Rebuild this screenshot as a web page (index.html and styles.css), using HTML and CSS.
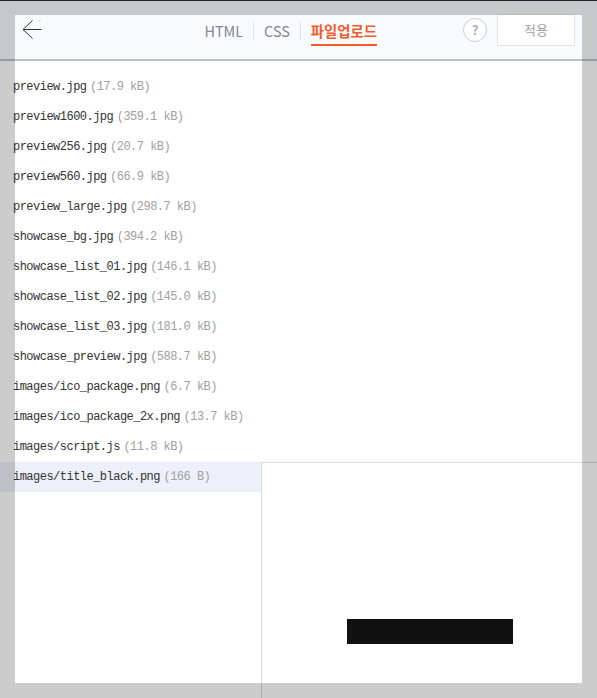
FILE: index.html
```html
<!DOCTYPE html>
<html lang="ko">
<head>
	<meta charset="UTF-8">
	<title>파일업로드</title>
	<link rel="stylesheet" href="styles.css">
</head>
<body>
	<div class="page">
		<div class="head">
			<a class="back">
				<svg width="20" height="20" viewBox="0 0 20 20"><path d="M19.5 9.5H1M10.5 .5l-9.5 9 9.5 9" fill="none" stroke="#333" stroke-width="1"/><path d="M16 .5h3" stroke="#ddd" stroke-width="1"/></svg>
			</a>
			<ul class="tabs">
				<li>HTML</li>
				<li>CSS</li>
				<li class="active">파일업로드</li>
			</ul>
			<div class="tools">
				<span class="help">?</span>
				<span class="apply">적용</span>
			</div>
		</div>
		<div class="body">
			<ul class="files">
				<li>preview.jpg<span>(17.9 kB)</span></li>
				<li>preview1600.jpg<span>(359.1 kB)</span></li>
				<li>preview256.jpg<span>(20.7 kB)</span></li>
				<li>preview560.jpg<span>(66.9 kB)</span></li>
				<li>preview_large.jpg<span>(298.7 kB)</span></li>
				<li>showcase_bg.jpg<span>(394.2 kB)</span></li>
				<li>showcase_list_01.jpg<span>(146.1 kB)</span></li>
				<li>showcase_list_02.jpg<span>(145.0 kB)</span></li>
				<li>showcase_list_03.jpg<span>(181.0 kB)</span></li>
				<li>showcase_preview.jpg<span>(588.7 kB)</span></li>
				<li>images/ico_package.png<span>(6.7 kB)</span></li>
				<li>images/ico_package_2x.png<span>(13.7 kB)</span></li>
				<li>images/script.js<span>(11.8 kB)</span></li>
				<li class="on">images/title_black.png<span>(166 B)</span></li>
			</ul>
			<div class="preview">
				<div class="black"></div>
			</div>
		</div>
	</div>
	<div class="frame"></div>
</body>
</html>
```

FILE: styles.css
```css
*{margin:0;padding:0;box-sizing:border-box;}
html,body{height:100%;}
body{background:#fff;font-family:"Noto Sans CJK KR","Noto Sans",sans-serif;overflow:hidden;}
ul{list-style:none;}
.page{height:698px;display:flex;flex-direction:column;}
.head{height:61px;flex:none;background:#f9fafd;border-bottom:2px solid #bcc1cb;padding:15px 22px 0 22px;display:flex;align-items:flex-start;position:relative;}
.back{display:block;margin-top:5px;line-height:0;}
.tabs{display:flex;align-items:flex-start;position:absolute;left:204.5px;top:22px;font-size:14.4px;color:#7d8796;}
.tabs li{padding:0 10px 0 0;margin-right:10px;border-right:1px solid #e1e3e8;height:18px;line-height:18px;}
.tabs .active{color:#ef5b2b;font-weight:700;height:24px;margin:0;padding:0;border-right:0;border-bottom:2px solid #ef5b2b;line-height:18px;}
.tools{margin-left:auto;display:flex;align-items:flex-start;}
.help{width:24px;height:24px;margin-top:3px;border:1px solid #c9cdd6;border-radius:50%;font-size:13px;font-weight:700;line-height:22px;text-align:center;color:#a8adb8;background:#fff;}
.apply{width:78px;height:32px;margin-left:10px;margin-top:-1px;border:1px solid #e1e4ea;background:#fff;font-size:13px;line-height:29px;text-align:center;color:#9a9ea6;}
.body{flex:1;display:flex;flex-direction:column;position:relative;}
.files{padding-top:11px;}
.files li{height:30px;width:262px;padding-left:13px;font-family:"Liberation Mono",monospace;font-size:12px;letter-spacing:-.52px;line-height:30px;color:#333;white-space:nowrap;}
.files li span{margin-left:3.5px;color:#a0a0a0;}
.files .on{background:#edf0f9;}
.preview{position:absolute;left:261px;right:0;top:401px;bottom:0;border-top:1px solid #d9d9d9;border-left:1px solid #d9d9d9;display:flex;justify-content:center;padding-top:156px;}
.black{width:166px;height:25px;background:#111112;}
.frame{position:absolute;left:0;top:0;width:597px;height:698px;border:15px solid rgba(0,0,0,.2);pointer-events:none;}
.frame::before{content:"";position:absolute;left:-15px;right:-15px;top:-15px;height:1px;background:#222;}
```
